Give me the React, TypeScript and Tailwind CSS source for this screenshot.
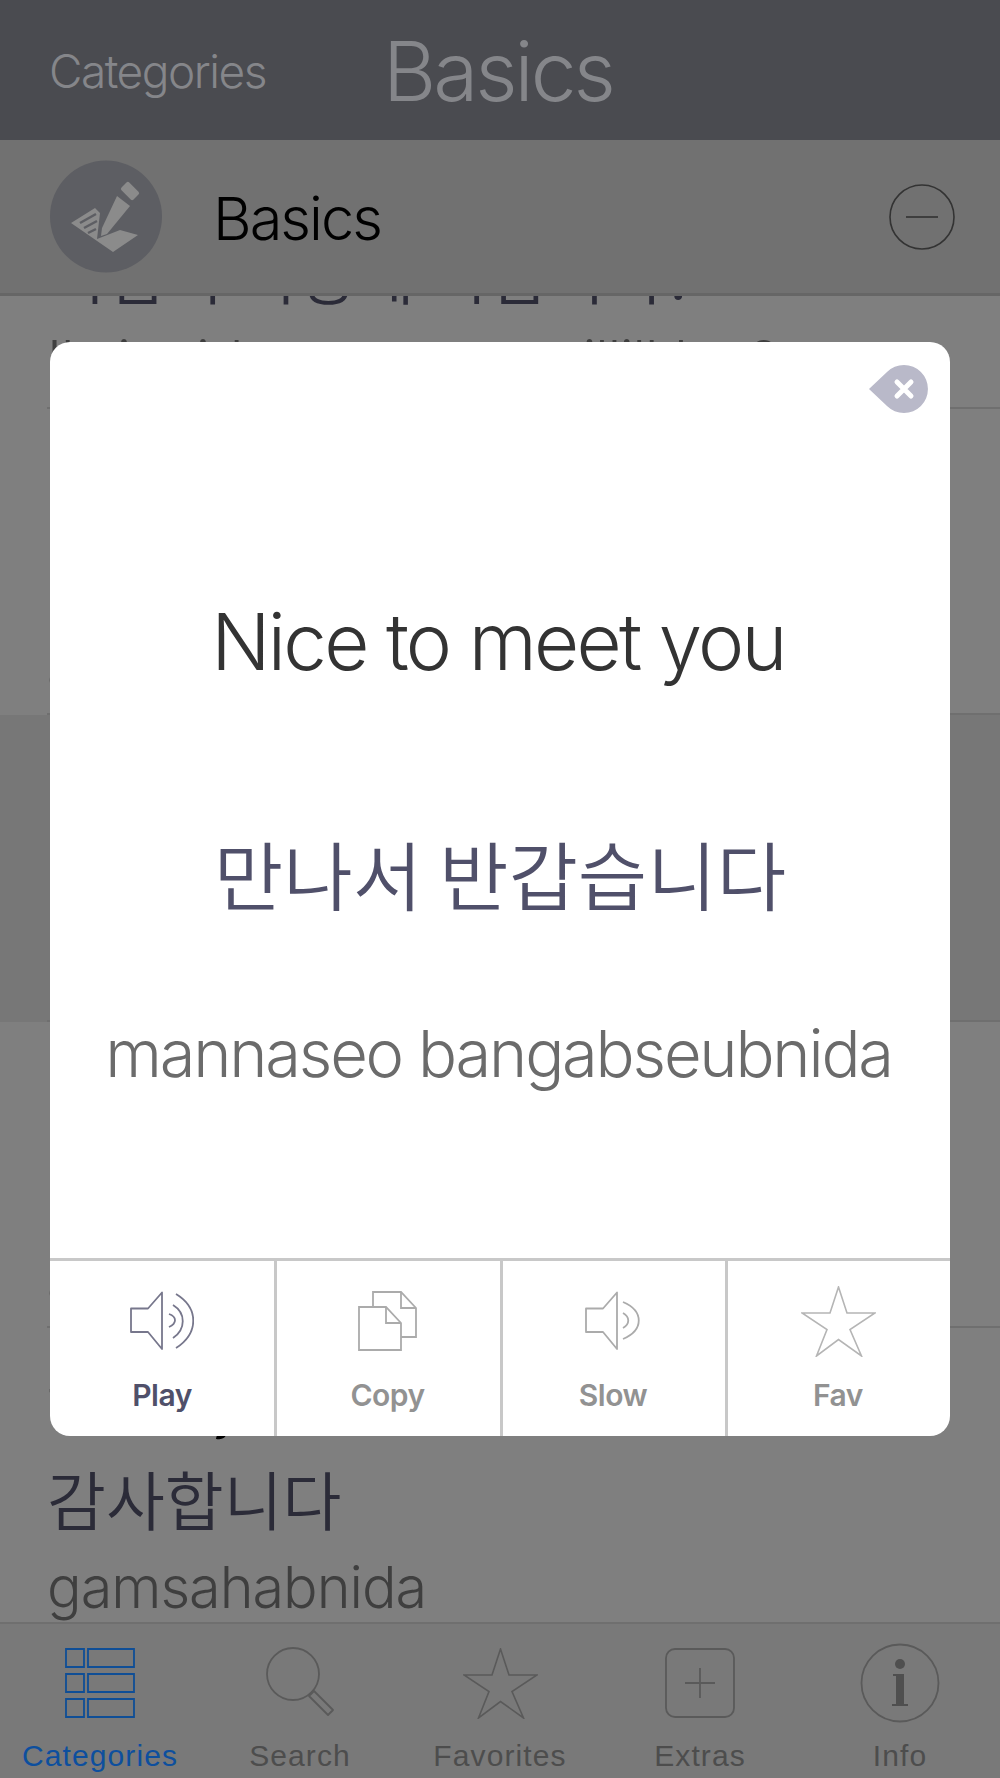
import type { ReactNode } from "react";

const starPoints = "37.5,1 29,27 1,27 26,43.5 15.5,70 37.5,53.5 60.5,70 49,43.5 74,27 46,27";

type Phrase = {
    english: string;
    korean: string;
    roman: string;
    active?: boolean;
};

const phrases: Phrase[] = [
    { english: "Is it available", korean: "시입니 니영에 시입니까?", roman: "Il sipnida nyeong-e sillilkka ?" },
    { english: "Hello", korean: "안녕하세요", roman: "annyeonghaseyo" },
    { english: "Nice to meet you", korean: "만나서 반갑습니다", roman: "mannaseo bangabseubnida", active: true },
    { english: "Goodbye", korean: "안녕히 가세요", roman: "annyeonghi gaseyo" },
    { english: "Thank you", korean: "감사합니다", roman: "gamsahabnida" },
];

function PhraseRow({ english, korean, roman, active }: Phrase) {
    return (
        <div className={`pl-[47px] ${active ? "bg-[#777777]" : ""}`}>
            <div className="h-[306.5px] pt-[50px] border-b-2 border-[#6f6f6f] overflow-hidden whitespace-nowrap">
                <p className="text-[54px] leading-[62px] font-light tracking-[-1px] text-black">{english}</p>
                <p className="mt-[18px] text-[64px] leading-[78px] text-[#2b2b38] font-['Noto_Sans_CJK_KR',sans-serif] font-[350]">{korean}</p>
                <p className="mt-[16px] text-[57.5px] leading-[70px] font-light tracking-[-1px] text-[#3f3f3f]">{roman}</p>
            </div>
        </div>
    );
}

function Speaker({ color, slow }: { color: string; slow?: boolean }) {
    if (slow) {
        return (
            <svg width="56" height="60" viewBox="0 0 56 60" fill="none" stroke={color} strokeWidth="1.8">
                <path d="M1 17.5H18L32 1.5V58L18 41H1Z" strokeLinejoin="round" />
                <path d="M38 11C59 20 59 39 38 48" />
                <path d="M38 22C45 26 45 33 38 37" />
            </svg>
        );
    }
    return (
        <svg width="64" height="60" viewBox="0 0 64 60" fill="none" stroke={color} strokeWidth="1.8">
            <path d="M1 17.5H18L32 1.5V58L18 41H1Z" strokeLinejoin="round" />
            <path d="M46 3C69 17 69 42 46 57" />
            <path d="M43 14C56 22 56 38 43 47" />
            <path d="M39 23C47 26 47 32 39 36" />
        </svg>
    );
}

function CopyIcon() {
    return (
        <svg width="60" height="60" viewBox="0 0 60 60" fill="none" stroke="#ababab" strokeWidth="1.8">
            <path d="M15 15V1H43L58 17V46H43" />
            <path d="M43 1V17H58" />
            <path d="M1 16H28L43 32V59H1Z" />
            <path d="M28 16V32H43" />
        </svg>
    );
}

function ActionButton({ label, icon, strong, last }: { label: string; icon: ReactNode; strong?: boolean; last?: boolean }) {
    return (
        <div className={`flex flex-col items-center h-full not-first:pr-[2px] ${last ? "" : "border-r-[3px] border-[#c8c8c8]"}`}>
            <div className="h-[72px] mt-[24px] flex items-center justify-center">{icon}</div>
            <span className={`mt-[21px] text-[30px] leading-[34px] font-semibold font-['Inter',sans-serif] tracking-[-0.5px] ${strong ? "text-[#50506a]" : "text-[#929292]"}`}>{label}</span>
        </div>
    );
}

function NoteBadge() {
    return (
        <svg width="112" height="113" viewBox="0 0 112 113" className="shrink-0">
            <circle cx="56" cy="56.5" r="56" fill="#5d5e63" />
            <rect x="71.5" y="25.5" width="17" height="11" rx="2" transform="rotate(45 80 31)" fill="#8b8b8b" />
            <path d="M67 36L80 46L57 74L51 76L52 68Z" fill="#8b8b8b" />
            <path d="M21 63L45 48L50 53L47 79L70 70L88 75L63 92Z" fill="#8b8b8b" />
            <path d="M30 63L46 54M34 68L47 61M38 73L46 69" stroke="#5d5e63" strokeWidth="2.5" />
        </svg>
    );
}

function TabItem({ label, icon, active }: { label: string; icon: ReactNode; active?: boolean }) {
    return (
        <div className="flex flex-col items-center pt-[21px]">
            <div className="h-[76px] flex items-center justify-center">{icon}</div>
            <span className={`mt-[18px] text-[30px] leading-[34px] tracking-[1.1px] ${active ? "text-[#0d4f9e]" : "text-[#4d4d4d]"}`}>{label}</span>
        </div>
    );
}

export default function App() {
    return (
        <div className="relative w-[1000px] h-[1778px] overflow-hidden flex flex-col bg-[#7f7f7f] font-['Inter','Liberation_Sans',sans-serif]">
            {/* Top bar */}
            <header className="h-[140px] shrink-0 bg-[#4a4b50] flex items-center pl-[49px] pt-[2px] text-[#85868a] font-light">
                <span className="text-[46px] tracking-[-1.5px]">Categories</span>
                <span className="ml-[117px] text-[82px] tracking-[-3px]">Basics</span>
            </header>

            {/* Category heading */}
            <div className="h-[156px] shrink-0 bg-[#717171] border-b-[3px] border-[#666666] flex items-center pl-[50px] pr-[45px] relative z-10">
                <NoteBadge />
                <span className="ml-[51px] mt-[4px] text-[59.5px] font-light tracking-[-2px] text-black">Basics</span>
                <svg width="66" height="66" viewBox="0 0 66 66" fill="none" stroke="#333333" strokeWidth="1.6" className="ml-auto">
                    <circle cx="33" cy="33" r="32" />
                    <path d="M17 33H49" />
                </svg>
            </div>

            {/* Phrase list, scrolled */}
            <div className="flex-1 overflow-hidden">
                <div className="mt-[-194px]">
                    {phrases.map((p) => (
                        <PhraseRow key={p.korean} {...p} />
                    ))}
                </div>
            </div>

            {/* Tab bar */}
            <nav className="h-[156px] shrink-0 bg-[#797979] border-t-2 border-[#6f6f6f] grid grid-cols-5 relative z-10 font-['Liberation_Sans',sans-serif]">
                <TabItem
                    active
                    label="Categories"
                    icon={
                        <svg width="70" height="70" viewBox="0 0 70 70" fill="none" stroke="#0f4e96" strokeWidth="1.8">
                            <path d="M1 1H19V19H1ZM23 1H69V19H23ZM1 26H19V44H1ZM23 26H69V44H23ZM1 51H19V69H1ZM23 51H69V69H23Z" />
                        </svg>
                    }
                />
                <TabItem
                    label="Search"
                    icon={
                        <svg width="70" height="72" viewBox="0 0 70 72" fill="none" stroke="#5a5a5a" strokeWidth="1.8">
                            <circle cx="28" cy="27" r="26" />
                            <path d="M44 49L49 44L68 63L63 68Z" strokeLinejoin="round" />
                        </svg>
                    }
                />
                <TabItem
                    label="Favorites"
                    icon={
                        <svg width="75" height="71" viewBox="0 0 75 71" fill="none" stroke="#5a5a5a" strokeWidth="1.6">
                            <polygon points={starPoints} />
                        </svg>
                    }
                />
                <TabItem
                    label="Extras"
                    icon={
                        <svg width="72" height="72" viewBox="0 0 72 72" fill="none" stroke="#5a5a5a" strokeWidth="1.8">
                            <rect x="2" y="2" width="68" height="68" rx="9" />
                            <path d="M36 21V51M21 36H51" />
                        </svg>
                    }
                />
                <TabItem
                    label="Info"
                    icon={
                        <svg width="80" height="80" viewBox="0 0 80 80" fill="none" stroke="#5a5a5a" strokeWidth="1.8">
                            <circle cx="40" cy="40" r="38.5" />
                            <circle cx="40" cy="21" r="5" fill="#4f4f4f" stroke="none" />
                            <path d="M33 31H44V61H48V63H32V61H36V33H33Z" fill="#4f4f4f" stroke="none" />
                        </svg>
                    }
                />
            </nav>

            {/* Phrase detail modal */}
            <div className="absolute left-[50px] top-[342px] w-[900px] h-[1094px] z-20 bg-white rounded-[20px] overflow-hidden flex flex-col">
                <div className="relative flex-1 flex flex-col items-center whitespace-nowrap">
                    <svg width="62" height="50" viewBox="0 0 62 50" className="absolute right-[21px] top-[22px]">
                        <path d="M2 25L20 8A24 24 0 1 1 20 42Z" fill="#b9b9c9" />
                        <path d="M30 18L44 32M44 18L30 32" stroke="#ffffff" strokeWidth="5" strokeLinecap="round" />
                    </svg>
                    <p className="mt-[253px] mr-[4px] text-[78px] leading-[94px] font-light tracking-[-2.7px] text-[#333333]">Nice to meet you</p>
                    <p className="mt-[138px] text-[75.5px] leading-[90px] text-[#50506a] font-['Noto_Sans_CJK_KR',sans-serif] font-[350]">만나서 반갑습니다</p>
                    <p className="mt-[97px] mr-[3px] text-[65px] leading-[80px] font-light tracking-[-2.2px] text-[#6b6b6b]">mannaseo bangabseubnida</p>
                </div>
                <div className="h-[178px] shrink-0 border-t-[3px] border-[#c8c8c8] grid grid-cols-[227px_226px_225px_222px]">
                    <ActionButton strong label="Play" icon={<Speaker color="#77778c" />} />
                    <ActionButton label="Copy" icon={<CopyIcon />} />
                    <ActionButton label="Slow" icon={<Speaker color="#ababab" slow />} />
                    <ActionButton
                        last
                        label="Fav"
                        icon={
                            <svg width="75" height="71" viewBox="0 0 75 71" fill="none" stroke="#b5b5b5" strokeWidth="1.6">
                                <polygon points={starPoints} />
                            </svg>
                        }
                    />
                </div>
            </div>
        </div>
    );
}
